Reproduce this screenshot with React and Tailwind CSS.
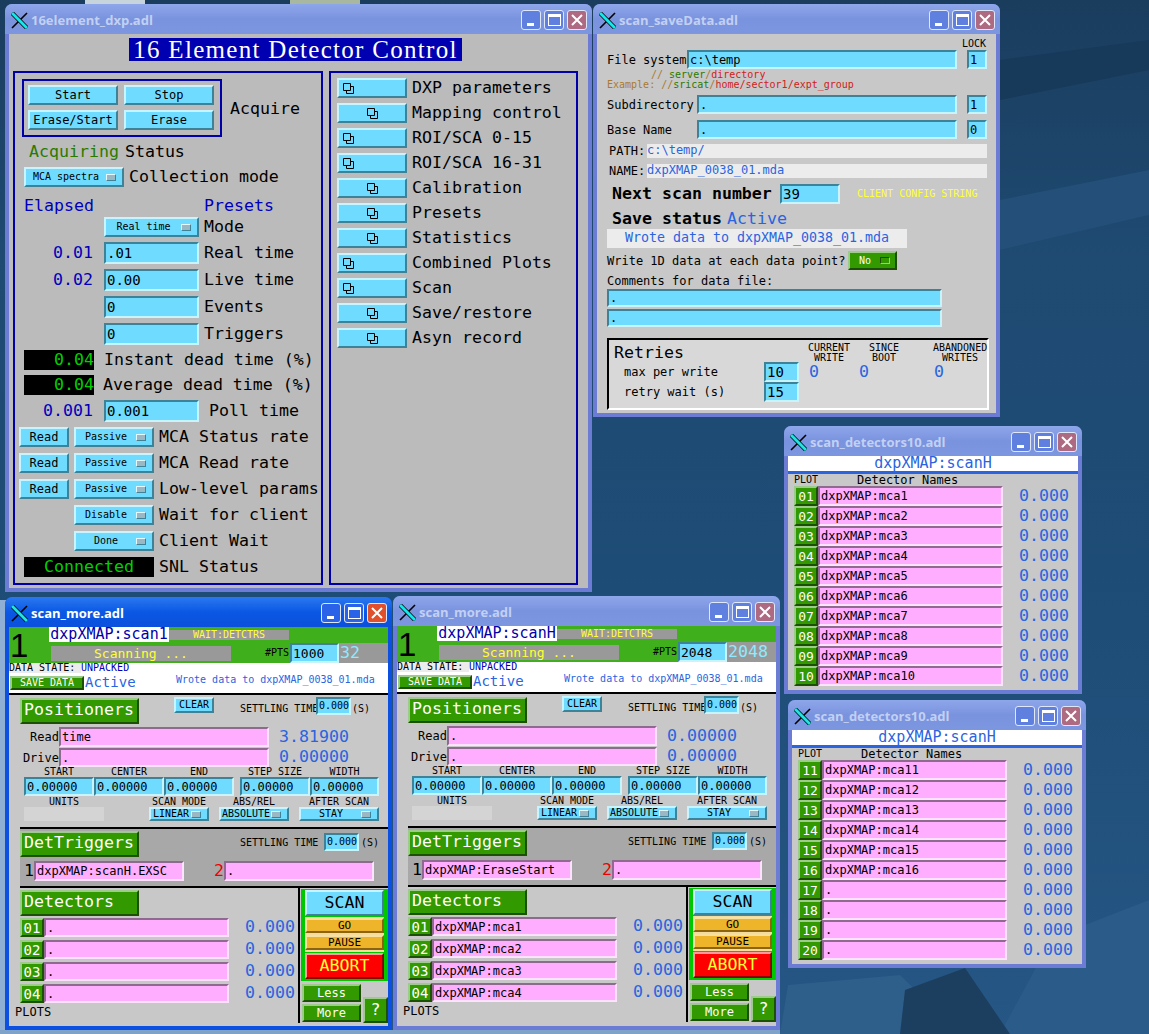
import React from "react";

const mono = "font-['DejaVu_Sans_Mono','Liberation_Mono',monospace]";
const L = "text-[16.6px] leading-none whitespace-nowrap";
const M = "text-[12px] leading-none whitespace-nowrap";
const S = "text-[10px] leading-none whitespace-nowrap";

const cyanUp = "border-2 border-t-[#c8f4ff] border-l-[#c8f4ff] border-b-[#3d8296] border-r-[#3d8296] bg-[#6fdcff]";
const cyanIn = "border-2 border-t-[#3d8296] border-l-[#3d8296] border-b-[#c8f4ff] border-r-[#c8f4ff] bg-[#6fdcff]";
const pinkIn = "border-2 border-t-[#8f6a8f] border-l-[#8f6a8f] border-b-[#ffe2ff] border-r-[#ffe2ff] bg-[#ffaeff]";
const greenUp = "border-2 border-t-[#9ccb8c] border-l-[#9ccb8c] border-b-[#1c4f00] border-r-[#1c4f00] bg-[#339900]";
const blue = "text-[#2a64e0]";
const navy = "text-[#0000bb]";

// --- Window chrome ---
const XIcon = () => (
  <svg width="17" height="17" viewBox="0 0 17 17" className="shrink-0">
    <path d="M16 1 L1 16" stroke="#000" strokeWidth="1.6" />
    <path d="M1 1 L16 16" stroke="#000" strokeWidth="4.4" />
    <path d="M1 1 L16 16" stroke="#19e6e6" strokeWidth="3" />
  </svg>
);

const WinButton = ({ className, children }) => (
  <div className={`w-[20px] h-[20px] rounded-[3px] border border-[#dfe8fb] flex items-center justify-center ${className}`}>
    {children}
  </div>
);

const Window = ({ pos, title, active, bodyClass = "bg-[#c8c8c8]", children }) => (
  <div className={`absolute ${pos} flex flex-col rounded-t-[7px] ${active ? "bg-[#0b50e0]" : "bg-[#6c7cd4]"}`}>
    <div
      className={`h-[30px] shrink-0 rounded-t-[7px] flex items-center pl-[6px] pr-[5px] pt-[2px] ${
        active
          ? "bg-gradient-to-b from-[#2a78f0] via-[#0a58e4] to-[#0b50dc]"
          : "bg-gradient-to-b from-[#8ea6ea] via-[#7a93de] to-[#7c96e0]"
      }`}
    >
      <XIcon />
      <span
        className={`ml-[3px] font-['Open_Sans',sans-serif] font-bold text-[13px] leading-none ${
          active ? "text-white" : "text-[#c2d0f2]"
        }`}
      >
        {title}
      </span>
      <div className="ml-auto flex gap-[3px]">
        <WinButton className={active ? "bg-[#2a62e8]" : "bg-[#5f80de]"}>
          <div className="w-[7px] h-[3px] bg-white mt-[9px] -ml-[1px]" />
        </WinButton>
        <WinButton className={active ? "bg-[#2a62e8]" : "bg-[#5f80de]"}>
          <div className="w-[13px] h-[12px] border border-t-[3px] border-white" />
        </WinButton>
        <WinButton className={active ? "bg-[#e0502a]" : "bg-[#ad6a80]"}>
          <svg width="12" height="12" viewBox="0 0 12 12">
            <path d="M1 1 L11 11 M11 1 L1 11" stroke="#fff" strokeWidth="2" />
          </svg>
        </WinButton>
      </div>
    </div>
    <div className={`flex-1 mx-[4px] mb-[4px] ${mono} ${bodyClass}`}>{children}</div>
  </div>
);

// --- MEDM widgets ---
const MenuMark = ({ green }) => (
  <div
    className={`w-[10px] h-[7px] shrink-0 border ${
      green
        ? "bg-[#339900] border-t-[#1c4f00] border-l-[#1c4f00] border-b-[#9ccb8c] border-r-[#9ccb8c]"
        : "bg-[#9ab8c4] border-t-[#e4f8ff] border-l-[#e4f8ff] border-b-[#3d8296] border-r-[#3d8296]"
    }`}
  />
);

const Menu = ({ className, label, size = S }) => (
  <div className={`${cyanUp} flex items-center pr-[6px] shrink-0 ${className}`}>
    <span className={`flex-1 text-center text-black ${size}`}>{label}</span>
    <MenuMark />
  </div>
);

const Btn = ({ className, label, size = M }) => (
  <div className={`${cyanUp} flex items-center justify-center text-black shrink-0 ${size} ${className}`}>{label}</div>
);

const Field = ({ className, value, size = M }) => (
  <div className={`${cyanIn} flex items-center pl-[1px] text-black shrink-0 ${size} ${className}`}>{value}</div>
);

const Pink = ({ className, value }) => (
  <div className={`${pinkIn} flex items-center pl-[1px] text-black shrink-0 ${M} ${className}`}>{value}</div>
);

const GreenBtn = ({ className, label, size = M, left }) => (
  <div
    className={`${greenUp} flex items-center text-white shrink-0 ${left ? "pl-[2px]" : "justify-center"} ${size} ${className}`}
  >
    {label}
  </div>
);

const RelatedIcon = () => (
  <svg width="13" height="13" viewBox="0 0 13 13" className="shrink-0">
    <path d="M1.5 1.5 H8.5 V8.5 H1.5 Z M4.5 8.5 V11.5 H11.5 V4.5 H8.5" fill="none" stroke="#000" strokeWidth="1" />
  </svg>
);

// --- 16 element window ---
const NumRow = ({ mt, elapsed, value, label, labelClass = "ml-[5px]" }) => (
  <div className={`flex items-center h-[22px] ${mt}`}>
    <span className={`w-[78px] text-right ${L} ${navy}`}>{elapsed}</span>
    <Field className="ml-[11px] w-[95px] h-[22px]" size="text-[14px] leading-none" value={value} />
    <span className={`${labelClass} ${L} text-black`}>{label}</span>
  </div>
);

const DeadRow = ({ mt, value, label, labelClass }) => (
  <div className={`flex items-center h-[20px] pl-[9px] ${mt}`}>
    <span className={`w-[70px] h-[20px] bg-black text-right text-[#00d000] pt-[2px] ${L}`}>{value}</span>
    <span className={`${labelClass} ${L} text-black`}>{label}</span>
  </div>
);

const RateRow = ({ mt, read, menu, label }) => (
  <div className={`flex items-center h-[20px] pl-[4px] ${mt}`}>
    {read ? <Btn className="w-[50px] h-[20px]" label="Read" /> : <div className="w-[50px]" />}
    <Menu className="ml-[5px] w-[80px] h-[20px]" label={menu} />
    <span className={`ml-[5px] ${L} text-black`}>{label}</span>
  </div>
);

const screens = [
  ["DXP parameters", false],
  ["Mapping control", true],
  ["ROI/SCA 0-15", false],
  ["ROI/SCA 16-31", false],
  ["Calibration", true],
  ["Presets", true],
  ["Statistics", true],
  ["Combined Plots", false],
  ["Scan", false],
  ["Save/restore", true],
  ["Asyn record", true],
];

const ControlWindow = () => (
  <Window pos="left-[5px] top-[4px] w-[587px] h-[588px]" title="16element_dxp.adl" bodyClass="bg-[#bbbbbb]">
    <div className="flex justify-center pr-[6px] pt-[4px]">
      <div className="w-[333px] h-[23px] bg-[#0000b0] text-white text-center font-['Liberation_Serif',serif] text-[25px] leading-[24px] tracking-[1.3px] whitespace-nowrap">
        16 Element Detector Control
      </div>
    </div>
    <div className="flex mt-[10px] ml-[4px] gap-[6px] h-[514px]">
      <div className="w-[310px] border-2 border-[#0000aa]">
        <div className="ml-[7px] mt-[6px] w-[200px] flex items-center">
          <div className="shrink-0 w-[200px] h-[58px] border-2 border-[#0000aa] pl-[4px] pt-[4px] grid grid-cols-[90px_90px] content-start gap-x-[6px] gap-y-[5px]">
            <Btn className="h-[20px]" label="Start" />
            <Btn className="h-[20px]" label="Stop" />
            <Btn className="h-[20px]" label="Erase/Start" />
            <Btn className="h-[20px]" label="Erase" />
          </div>
          <span className={`shrink-0 ml-[8px] mt-[2px] ${L} text-black`}>Acquire</span>
        </div>
        <div className="flex items-center h-[20px] mt-[5px] pl-[14px]">
          <span className={`${L} text-[#2a7a00]`}>Acquiring</span>
          <span className={`ml-[6px] ${L} text-black`}>Status</span>
        </div>
        <div className="flex items-center h-[20px] mt-[5px] pl-[9px]">
          <Menu className="w-[100px] h-[20px]" label="MCA spectra" />
          <span className={`ml-[5px] ${L} text-black`}>Collection mode</span>
        </div>
        <div className={`flex items-center h-[20px] mt-[8px] pt-[2px] pl-[9px] ${L} ${navy}`}>
          <span className="w-[180px]">Elapsed</span>
          <span>Presets</span>
        </div>
        <div className="flex items-center h-[20px] mt-[2px] pl-[89px]">
          <Menu className="w-[95px] h-[20px]" label="Real time" />
          <span className={`ml-[5px] ${L} text-black`}>Mode</span>
        </div>
        <NumRow mt="mt-[5px]" elapsed="0.01" value=".01" label="Real time" />
        <NumRow mt="mt-[5px]" elapsed="0.02" value="0.00" label="Live time" />
        <NumRow mt="mt-[5px]" value="0" label="Events" />
        <NumRow mt="mt-[5px]" value="0" label="Triggers" />
        <DeadRow mt="mt-[5px]" value="0.04" label="Instant dead time (%)" labelClass="ml-[10px]" />
        <DeadRow mt="mt-[5px]" value="0.04" label="Average dead time (%)" labelClass="ml-[9px]" />
        <NumRow mt="mt-[5px]" elapsed="0.001" value="0.001" label="Poll time" labelClass="ml-[10px]" />
        <RateRow mt="mt-[5px]" read menu="Passive" label="MCA Status rate" />
        <RateRow mt="mt-[6px]" read menu="Passive" label="MCA Read rate" />
        <RateRow mt="mt-[6px]" read menu="Passive" label="Low-level params" />
        <RateRow mt="mt-[6px]" menu="Disable" label="Wait for client" />
        <RateRow mt="mt-[6px]" menu="Done" label="Client Wait" />
        <div className="flex items-center h-[20px] mt-[6px] pl-[9px]">
          <span className={`w-[130px] h-[20px] bg-black text-center text-[#00d000] pt-[2px] ${L}`}>Connected</span>
          <span className={`ml-[5px] ${L} text-black`}>SNL Status</span>
        </div>
      </div>
      <div className="w-[249px] border-2 border-[#0000aa] pl-[6px] pt-[5px] flex flex-col gap-[5px]">
        {screens.map(([label, centered]) => (
          <div key={label} className="flex items-center h-[20px]">
            <div className={`${cyanUp} w-[70px] h-[20px] flex items-center shrink-0 ${centered ? "justify-center" : "pl-[3px]"}`}>
              <RelatedIcon />
            </div>
            <span className={`ml-[5px] ${L} text-black`}>{label}</span>
          </div>
        ))}
      </div>
    </div>
  </Window>
);

// --- scan_saveData window ---
const SaveRow = ({ mt, label, labelWidth, fieldWidth, value, lock }) => (
  <div className={`flex items-center h-[19px] ${mt}`}>
    <span className={`${labelWidth} ${M} text-black`}>{label}</span>
    <Field className={`${fieldWidth} h-[19px]`} value={value} />
    <Field className="ml-[10px] w-[20px] h-[19px]" value={lock} />
  </div>
);

const Counter = ({ className, top, bottom }) => (
  <div className={`${className} text-center text-black ${S} shrink-0`}>
    <div>{top}</div>
    <div>{bottom}</div>
  </div>
);

const SaveDataWindow = () => (
  <Window pos="left-[593px] top-[4px] w-[407px] h-[413px]" title="scan_saveData.adl">
    <div className="pl-[10px]">
      <div className={`pt-[5px] h-[16px] pl-[355px] text-black ${S}`}>LOCK</div>
      <SaveRow label="File system" labelWidth="w-[80px]" fieldWidth="w-[270px]" value="c:\temp" lock="1" />
      <div className={`${S} h-[10px] pl-[44px] pt-[1px]`}>
        <span className="text-[#a87a30]">// </span>
        <span className="text-[#2a7a00]"> server</span>
        <span className="text-[#a87a30]">/</span>
        <span className="text-[#d02020]">directory</span>
      </div>
      <div className={`${S} h-[10px] pt-[1px]`}>
        <span className="text-[#a87a30]">Example: //</span>
        <span className="text-[#2a7a00]">sricat</span>
        <span className="text-[#a87a30]">/</span>
        <span className="text-[#d02020]">home/sector1/expt_group</span>
      </div>
      <SaveRow mt="mt-[6px]" label="Subdirectory" labelWidth="w-[90px]" fieldWidth="w-[260px]" value="." lock="1" />
      <SaveRow mt="mt-[6px]" label="Base Name" labelWidth="w-[90px]" fieldWidth="w-[260px]" value="." lock="0" />
      <div className="flex items-center h-[14px] mt-[5px] pl-[2px]">
        <span className={`w-[38px] ${M} text-black`}>PATH:</span>
        <span className={`w-[340px] h-[14px] bg-[#ececec] ${M} ${blue}`}>c:\temp/</span>
      </div>
      <div className="flex items-center h-[14px] mt-[6px] pl-[2px]">
        <span className={`w-[38px] ${M} text-black`}>NAME:</span>
        <span className={`w-[340px] h-[14px] bg-[#ececec] ${M} ${blue}`}>dxpXMAP_0038_01.mda</span>
      </div>
      <div className="flex items-center h-[20px] mt-[6px] pl-[5px]">
        <span className={`w-[168px] font-bold ${L} text-black`}>Next scan number</span>
        <Field className="w-[60px] h-[20px]" size="text-[14px] leading-none" value="39" />
        <span className={`ml-[17px] ${S} text-[#ffff33]`}>CLIENT CONFIG STRING</span>
      </div>
      <div className="flex items-center h-[20px] mt-[5px] pl-[5px]">
        <span className={`w-[115px] font-bold ${L} text-black`}>Save status</span>
        <span className={`${L} ${blue}`}>Active</span>
      </div>
      <div className={`w-[300px] h-[19px] bg-[#ececec] text-center ${blue} text-[13.3px] leading-[18px] whitespace-nowrap`}>
        Wrote data to dxpXMAP_0038_01.mda
      </div>
      <div className="flex items-center h-[19px] mt-[3px]">
        <span className={`w-[241px] ${M} text-black`}>Write 1D data at each data point?</span>
        <div className={`${greenUp} w-[49px] h-[19px] flex items-center pr-[5px] shrink-0`}>
          <span className={`flex-1 text-center text-white ${S}`}>No</span>
          <MenuMark green />
        </div>
      </div>
      <div className={`mt-[5px] h-[12px] ${M} text-black`}>Comments for data file:</div>
      <Field className="mt-[2px] w-[335px] h-[18px]" value="." />
      <Field className="mt-[2px] w-[335px] h-[18px]" value="." />
      <div className="mt-[11px] w-[382px] h-[72px] bg-[#d8d8d8] border-2 border-t-black border-l-black border-b-white border-r-white">
        <div className="flex h-[22px]">
          <span className={`ml-[5px] mt-[5px] w-[193px] ${L} text-black`}>Retries</span>
          <Counter className="mt-[3px] w-[44px]" top="CURRENT" bottom="WRITE" />
          <Counter className="mt-[3px] ml-[17px] w-[32px]" top="SINCE" bottom="BOOT" />
          <Counter className="mt-[3px] ml-[33px] w-[54px]" top="ABANDONED" bottom="WRITES" />
        </div>
        <div className="flex items-center h-[20px]">
          <span className={`ml-[15px] w-[140px] ${M} text-black`}>max per write</span>
          <Field className="w-[35px] h-[20px]" size="text-[14px] leading-none" value="10" />
          <span className={`ml-[10px] w-[50px] ${L} ${blue}`}>0</span>
          <span className={`w-[75px] ${L} ${blue}`}>0</span>
          <span className={`${L} ${blue}`}>0</span>
        </div>
        <div className="flex items-center h-[20px]">
          <span className={`ml-[15px] w-[140px] ${M} text-black`}>retry wait (s)</span>
          <Field className="w-[35px] h-[20px]" size="text-[14px] leading-none" value="15" />
        </div>
      </div>
    </div>
  </Window>
);

// --- scan_detectors10 windows ---
const DetectorWindow = ({ pos, first, names }) => (
  <Window pos={pos} title="scan_detectors10.adl">
    <div className={`h-[15px] bg-white text-center ${blue} text-[15px] leading-[15px]`}>dxpXMAP:scanH</div>
    <div className="h-[3px] bg-[#2a64e0]" />
    <div className="h-[12px] flex items-center pl-[6px] text-black">
      <span className={`w-[63px] ${S}`}>PLOT</span>
      <span className={M}>Detector Names</span>
    </div>
    <div className="pl-[6px]">
      {names.map((name, i) => (
        <div key={i} className="flex items-center h-[20px]">
          <GreenBtn className="w-[24px] h-[20px]" size="text-[13px] leading-none" label={String(first + i).padStart(2, "0")} />
          <Pink className="w-[185px] h-[20px]" value={name} />
          <span className={`ml-[16px] ${L} ${blue}`}>0.000</span>
        </div>
      ))}
    </div>
  </Window>
);

// --- scan_more windows ---
const cols = [
  ["START", "w-[70px]"],
  ["CENTER", "w-[70px]"],
  ["END", "w-[70px]"],
  ["STEP SIZE", "ml-[6px] w-[70px]"],
  ["WIDTH", "w-[69px]"],
];

const ScanWindow = ({ pos, active, pv, pts, count, readName, readValue, trigger, dets }) => (
  <Window pos={pos} title="scan_more.adl" active={active}>
    <div className="flex h-[36px] bg-[#3fb01c]">
      <span className="w-[40px] pl-[1px] pt-[2px] text-[33px] leading-[33px] text-black font-['Liberation_Sans',sans-serif]">1</span>
      <div className="flex-1 flex flex-col">
        <div className="flex items-start h-[16px]">
          <span className="w-[120px] h-[15px] bg-white text-center text-[#0000aa] text-[15px] leading-[15px]">{pv}</span>
          <span className={`w-[120px] h-[10px] mt-[3px] bg-[#999999] text-center text-[#ffff33] ${S}`}>WAIT:DETCTRS</span>
        </div>
        <div className="flex items-center h-[20px]">
          <span className="ml-[2px] w-[180px] h-[15px] bg-[#999999] text-center text-[#ffff33] text-[13px] leading-[15px] whitespace-nowrap">
            Scanning ...
          </span>
          <span className={`ml-[34px] w-[25px] text-black ${S}`}>#PTS</span>
          <Field className="w-[49px] h-[20px]" size="text-[13px] leading-none" value={pts} />
          <div className="flex-1 h-[20px] bg-[#999999] flex items-center pl-[1px]">
            <span className={`${L} text-[#8fe9ff]`}>{count}</span>
          </div>
        </div>
      </div>
    </div>
    <div className={`h-[10px] bg-[#ececec] flex text-black ${S}`}>
      <span className="w-[72px]">DATA STATE:</span>
      <span className={`flex-1 bg-white ${navy}`}>UNPACKED</span>
    </div>
    <div className="h-[20px] bg-white flex items-center">
      <GreenBtn className="ml-[1px] w-[74px] h-[14px]" size={S} label="SAVE DATA" />
      <span className={`ml-[1px] w-[91px] ${blue} text-[14px] leading-none -mt-[3px]`}>Active</span>
      <span className={`${S} ${blue} -mt-[6px]`}>Wrote data to dxpXMAP_0038_01.mda</span>
    </div>
    <div className="h-[2px] bg-black" />

    <div className="flex items-start h-[29px] pl-[11px]">
      <GreenBtn left className="mt-[3px] w-[119px] h-[26px] pb-[2px]" size={L} label="Positioners" />
      <Btn className="mt-[2px] ml-[35px] w-[40px] h-[16px]" size={S} label="CLEAR" />
      <span className={`mt-[9px] ml-[26px] w-[76px] text-black ${S}`}>SETTLING TIME</span>
      <Field className="mt-[2px] w-[35px] h-[18px]" size={S} value="0.000" />
      <span className={`mt-[9px] ml-[1px] text-black ${S}`}>(S)</span>
    </div>
    <div className="flex items-center h-[20px] mt-[3px]">
      <span className={`w-[50px] text-right text-black ${M}`}>Read</span>
      <Pink className="w-[210px] h-[20px]" value={readName} />
      <span className={`ml-[10px] ${L} ${blue}`}>{readValue}</span>
    </div>
    <div className="flex items-center h-[19px] mt-[1px]">
      <span className={`w-[50px] text-right text-black ${M}`}>Drive</span>
      <Pink className="w-[210px] h-[19px]" value="." />
      <span className={`ml-[10px] ${L} ${blue}`}>0.00000</span>
    </div>
    <div className="flex h-[10px] pl-[15px]">
      {cols.map(([label, width]) => (
        <span key={label} className={`${width} text-center text-black ${S}`}>{label}</span>
      ))}
    </div>
    <div className="flex h-[19px] pl-[15px]">
      {cols.map(([label, width]) => (
        <Field key={label} className={`${width} h-[19px]`} value="0.00000" />
      ))}
    </div>
    <div className={`flex h-[11px] pl-[15px] pt-[1px] text-black text-center ${S}`}>
      <span className="w-[80px]">UNITS</span>
      <span className="ml-[45px] w-[60px]">SCAN MODE</span>
      <span className="ml-[10px] w-[70px]">ABS/REL</span>
      <span className="ml-[10px] w-[80px]">AFTER SCAN</span>
    </div>
    <div className="flex h-[14px] pl-[15px]">
      <div className="w-[80px] h-[14px] bg-[#d4d4d4]" />
      <Menu className="ml-[45px] w-[60px] h-[14px]" label="LINEAR" />
      <Menu className="ml-[10px] w-[70px] h-[14px]" label="ABSOLUTE" />
      <Menu className="ml-[10px] w-[80px] h-[14px]" label="STAY" />
    </div>
    <div className="h-[2px] ml-[11px] mt-[6px] bg-black" />

    <div className="ml-[11px] h-[57px] bg-[#a8a8a8]">
      <div className="flex items-start h-[28px]">
        <GreenBtn left className="mt-[2px] w-[119px] h-[26px] pb-[2px]" size={L} label="DetTriggers" />
        <span className={`mt-[9px] ml-[101px] w-[84px] text-black ${S}`}>SETTLING TIME</span>
        <Field className="mt-[4px] w-[35px] h-[18px]" size={S} value="0.000" />
        <span className={`mt-[9px] ml-[2px] text-black ${S}`}>(S)</span>
      </div>
      <div className="flex items-center h-[20px] mt-[4px]">
        <span className={`ml-[4px] w-[10px] ${L} text-black`}>1</span>
        <Pink className="w-[150px] h-[20px]" value={trigger} />
        <span className={`ml-[30px] w-[10px] ${L} text-[#ee0000]`}>2</span>
        <Pink className="w-[150px] h-[20px]" value="." />
      </div>
    </div>
    <div className="h-[2px] ml-[11px] bg-black" />

    <div className="flex h-[135px]">
      <div className="w-[290px] pl-[11px]">
        <GreenBtn left className="mt-[2px] w-[119px] h-[26px] pb-[2px]" size={L} label="Detectors" />
        {dets.map((name, i) => (
          <div key={i} className={`flex items-center h-[19px] ${i === 0 ? "mt-[2px]" : "mt-[3px]"}`}>
            <GreenBtn className="w-[24px] h-[19px]" size="text-[14px] leading-none" label={`0${i + 1}`} />
            <Pink className="w-[185px] h-[19px]" value={name} />
            <span className={`ml-[16px] ${L} ${blue}`}>0.000</span>
          </div>
        ))}
        <div className={`mt-[3px] -ml-[5px] text-black ${M}`}>PLOTS</div>
      </div>
      <div className="w-[2px] h-[135px] bg-black" />
      <div className="flex-1">
        <div className="ml-[1px] mt-[1px] h-[92px] bg-[#00c800] pl-[4px] pr-[2px] pt-[1px]">
          <Btn className="w-[79px] h-[26px]" size={L} label="SCAN" />
          <div className="mt-[1px] w-[79px] h-[35px] bg-[#f4dc9c] pt-[1px]">
            <div className="h-[15px] bg-[#eeb42a] border-2 border-t-[#f8e0a0] border-l-[#f8e0a0] border-b-[#8a6410] border-r-[#8a6410] flex items-center justify-center text-black text-[11px] leading-none">
              GO
            </div>
            <div className="mt-[2px] h-[15px] bg-[#eeb42a] border-2 border-t-[#f8e0a0] border-l-[#f8e0a0] border-b-[#8a6410] border-r-[#8a6410] flex items-center justify-center text-black text-[11px] leading-none">
              PAUSE
            </div>
          </div>
          <div className={`mt-[1px] w-[79px] h-[26px] bg-[#ff0000] border-2 border-t-[#ff9a9a] border-l-[#ff9a9a] border-b-[#8a0000] border-r-[#8a0000] flex items-center justify-center text-[#ffff33] ${L}`}>
            ABORT
          </div>
        </div>
        <div className="flex ml-[2px] mt-[3px]">
          <div>
            <GreenBtn className="w-[59px] h-[18px]" label="Less" />
            <GreenBtn className="mt-[2px] w-[59px] h-[18px]" label="More" />
          </div>
          <GreenBtn className="ml-[2px] mt-[13px] w-[25px] h-[26px]" size={L} label="?" />
        </div>
      </div>
    </div>
  </Window>
);

// --- Desktop background ---
const Wallpaper = () => (
  <svg className="absolute inset-0" width="1149" height="1034" viewBox="0 0 1149 1034">
    <defs>
      <linearGradient id="wall" x1="0" y1="0" x2="0" y2="1">
        <stop offset="0" stopColor="#1a3d5e" />
        <stop offset="0.25" stopColor="#1f4a72" />
        <stop offset="0.55" stopColor="#1d4c76" />
        <stop offset="1" stopColor="#265684" />
      </linearGradient>
    </defs>
    <rect width="1149" height="1034" fill="url(#wall)" />
    <rect x="85" y="0" width="60" height="4" fill="#c8d4dc" />
    <rect x="290" y="0" width="70" height="4" fill="#a8b8a0" />
    <rect x="0" y="600" width="6" height="434" fill="#8fb0d4" />
    <rect x="0" y="1030" width="780" height="4" fill="#7fa2c8" />
    <path d="M1000 60 L1149 40 L1149 70 L1000 100 Z" fill="#173a5a" />
    <path d="M1000 200 L1149 170 L1149 215 L1000 250 Z" fill="#234f78" />
    <path d="M1085 925 L1149 900 L1149 1034 L1000 1034 L1040 960 Z" fill="#2b5b88" />
    <path d="M788 985 L900 975 L960 1034 L780 1034 Z" fill="#2e5e8a" />
    <path d="M905 990 L965 968 L1010 1034 L900 1034 Z" fill="#1c3f60" />
  </svg>
);

const App = () => (
  <div className="relative w-[1149px] h-[1034px] overflow-hidden">
    <Wallpaper />
    <ControlWindow />
    <SaveDataWindow />
    <DetectorWindow
      pos="left-[784px] top-[426px] w-[298px] h-[268px]"
      first={1}
      names={["dxpXMAP:mca1", "dxpXMAP:mca2", "dxpXMAP:mca3", "dxpXMAP:mca4", "dxpXMAP:mca5", "dxpXMAP:mca6", "dxpXMAP:mca7", "dxpXMAP:mca8", "dxpXMAP:mca9", "dxpXMAP:mca10"]}
    />
    <DetectorWindow
      pos="left-[788px] top-[700px] w-[298px] h-[268px]"
      first={11}
      names={["dxpXMAP:mca11", "dxpXMAP:mca12", "dxpXMAP:mca13", "dxpXMAP:mca14", "dxpXMAP:mca15", "dxpXMAP:mca16", ".", ".", ".", "."]}
    />
    <ScanWindow
      pos="left-[5px] top-[597px] w-[387px] h-[433px]"
      active
      pv="dxpXMAP:scan1"
      pts="1000"
      count="32"
      readName="time"
      readValue="3.81900"
      trigger="dxpXMAP:scanH.EXSC"
      dets={[".", ".", ".", "."]}
    />
    <ScanWindow
      pos="left-[393px] top-[596px] w-[387px] h-[434px]"
      pv="dxpXMAP:scanH"
      pts="2048"
      count="2048"
      readName="."
      readValue="0.00000"
      trigger="dxpXMAP:EraseStart"
      dets={["dxpXMAP:mca1", "dxpXMAP:mca2", "dxpXMAP:mca3", "dxpXMAP:mca4"]}
    />
  </div>
);

export default App;
